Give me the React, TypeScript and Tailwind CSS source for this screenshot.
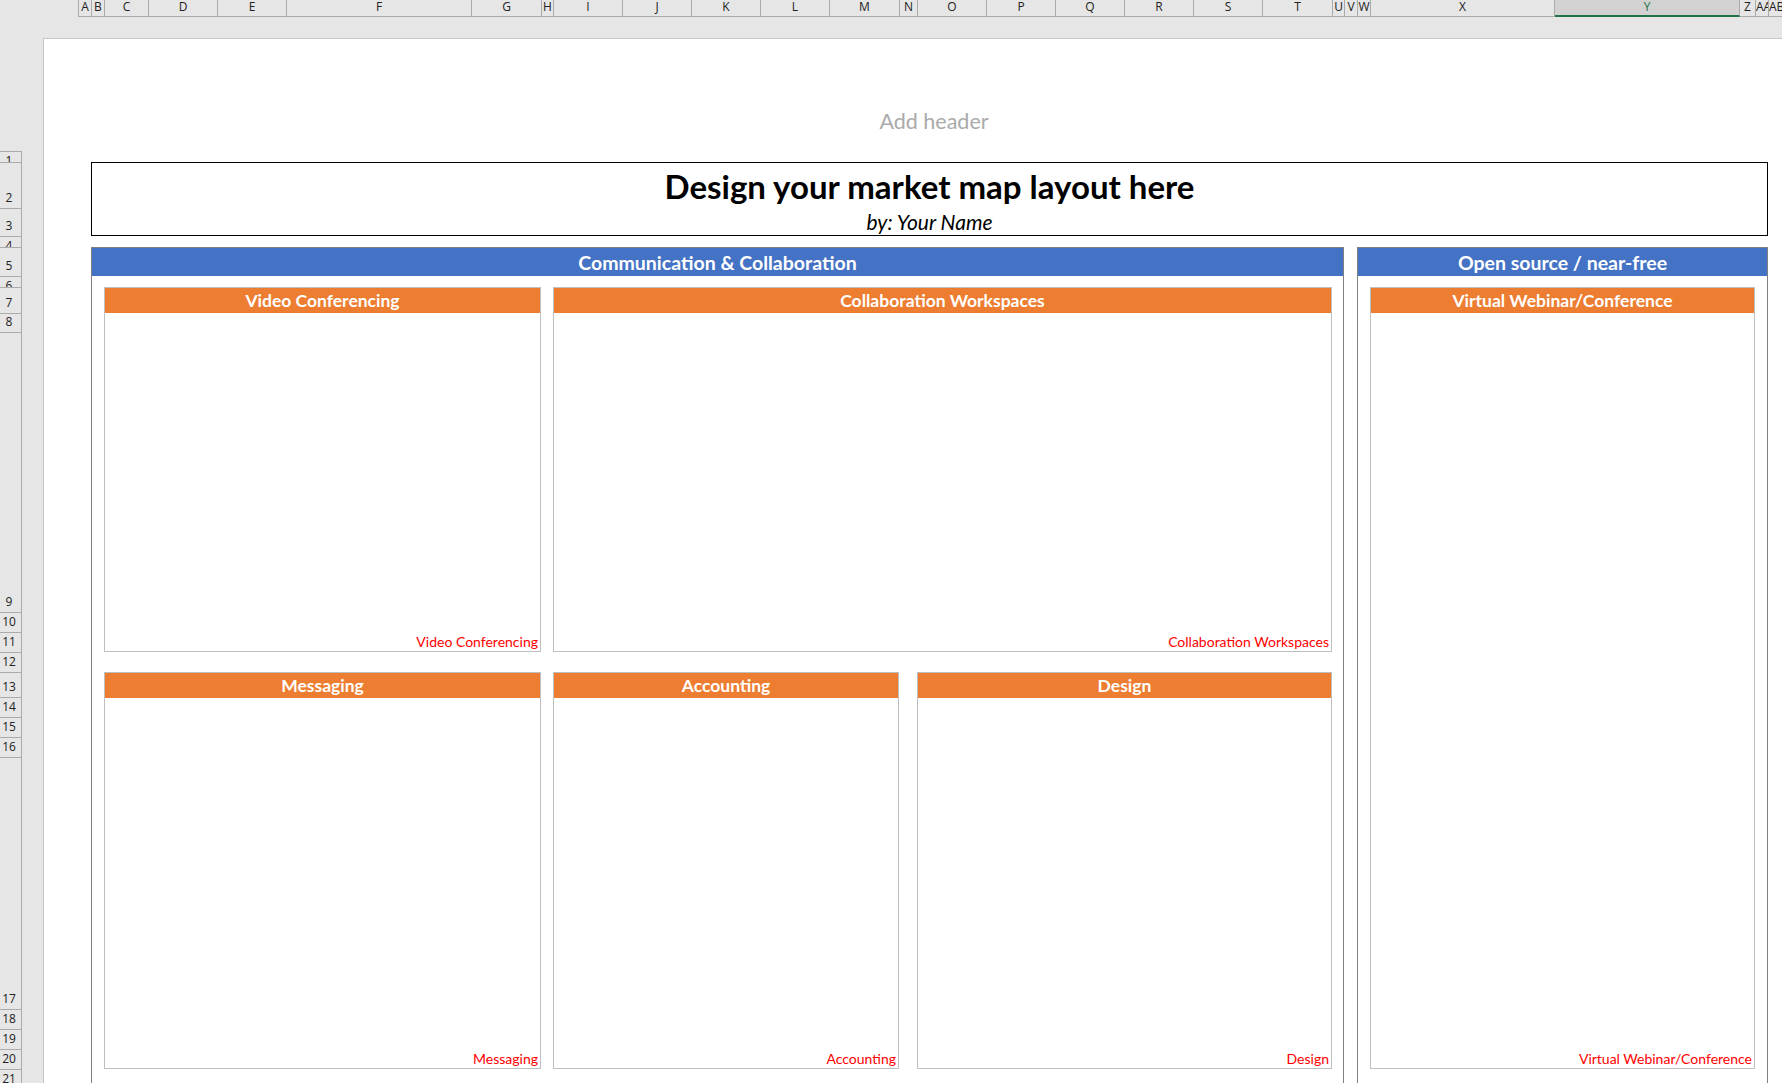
import clsx from "clsx";

// Excel-like column widths (A..AB) and row heights (1..22), shared by headers and the sheet
const COLS =
  "grid-cols-[13px_13px_44px_69px_69px_185px_70px_12px_69px_69px_69px_69px_70px_18px_69px_69px_69px_69px_69px_70px_12px_13px_13px_184px_185px_16px_13px_14px]";
const ROWS =
  "grid-rows-[11px_46px_28px_11px_29px_11px_26px_19px_280px_20px_20px_20px_25px_20px_20px_20px_252px_20px_20px_20px_20px_200px]";

const columns = [
  "A", "B", "C", "D", "E", "F", "G", "H", "I", "J", "K", "L", "M", "N",
  "O", "P", "Q", "R", "S", "T", "U", "V", "W", "X", "Y", "Z", "AA", "AB",
];
const rowHeights = [11, 46, 28, 11, 29, 11, 26, 19, 280, 20, 20, 20, 25, 20, 20, 20, 252, 20, 20, 20, 20, 200];

function ColumnHeader() {
  return (
    <div className="flex h-[17px] flex-none">
      <div className="w-[78px] flex-none" />
      <div className={clsx("grid flex-none border-l border-[#ababab]", COLS)}>
        {columns.map((c) => (
          <div
            key={c}
            className={clsx(
              "whitespace-nowrap border-r border-[#ababab] text-center font-['Open_Sans',sans-serif] text-[12px] leading-[13px]",
              c.length > 1 && "overflow-hidden",
              c === "Y"
                ? "border-b-2 border-b-[#217346] bg-[#d2d2d2] text-[#217346]"
                : "border-b text-[#222]"
            )}
          >
            {c}
          </div>
        ))}
      </div>
    </div>
  );
}

function RowHeader() {
  return (
    <div className="w-[22px] flex-none pt-[134px]">
      <div className={clsx("grid border-r border-t border-[#ababab]", ROWS)}>
        {rowHeights.map((h, i) => (
          <div
            key={i}
            className={clsx(
              "flex justify-center overflow-hidden border-b border-[#ababab] pr-[3px] font-['Open_Sans',sans-serif] text-[12px] leading-[12px] text-[#222]",
              h >= 19 ? "items-end pb-[4px]" : "items-start pt-[3px]"
            )}
          >
            {i + 1}
          </div>
        ))}
      </div>
    </div>
  );
}

function Card({ title, className }: { title: string; className: string }) {
  return (
    <div className={clsx("flex flex-col border border-[#bfbfbf] bg-white", className)}>
      <div className="flex h-[25px] flex-none items-center justify-center bg-[#ED7D31] pt-[2px] text-[17.5px] font-bold text-white">
        {title}
      </div>
      <div className="flex flex-1 items-end justify-end pb-[2px] pr-[2px] text-[14px] leading-[14px] text-[#FF0000]">
        {title}
      </div>
    </div>
  );
}

function Section({ title, className }: { title: string; className: string }) {
  return (
    <div className={clsx("border border-[#808080] bg-white", className)}>
      <div className="flex h-[28px] items-center justify-center bg-[#4472C4] pt-[2px] text-[19.5px] font-bold text-white">
        {title}
      </div>
    </div>
  );
}

export default function App() {
  return (
    <div className="flex h-[1083px] w-[1782px] flex-col overflow-hidden bg-[#e6e6e6] font-[Lato,sans-serif]">
      <ColumnHeader />
      <div className="flex flex-1">
        <RowHeader />
        <div className="ml-[21px] mt-[21px] w-[1781px] flex-none border-l border-t border-[#c6c6c6] bg-white">
          {/* Page header area */}
          <div className="h-[112px] w-[1780px] pt-[71px] text-center text-[21.5px] leading-[22px] text-[#aaaaaa]">
            Add header
          </div>

          {/* Sheet grid */}
          <div className={clsx("grid pl-[34px]", COLS, ROWS)}>
            <div className="col-start-2 col-end-28 row-start-2 row-end-4 flex flex-col items-center border border-black text-black">
              <div className="pt-[6px] text-[33px] font-bold leading-[34px]">Design your market map layout here</div>
              <div className="mt-[8px] text-[21px] italic leading-[22px]">by: Your Name</div>
            </div>

            <Section title="Communication & Collaboration" className="col-start-2 col-end-22 row-start-5 row-end-23" />
            <Section title="Open source / near-free" className="col-start-23 col-end-28 row-start-5 row-end-23" />

            <Card title="Video Conferencing" className="col-start-3 col-end-8 row-start-7 row-end-12" />
            <Card title="Collaboration Workspaces" className="col-start-9 col-end-21 row-start-7 row-end-12" />
            <Card title="Messaging" className="col-start-3 col-end-8 row-start-13 row-end-21" />
            <Card title="Accounting" className="col-start-9 col-end-14 row-start-13 row-end-21" />
            <Card title="Design" className="col-start-15 col-end-21 row-start-13 row-end-21" />
            <Card title="Virtual Webinar/Conference" className="col-start-24 col-end-27 row-start-7 row-end-21" />
          </div>
        </div>
      </div>
    </div>
  );
}
